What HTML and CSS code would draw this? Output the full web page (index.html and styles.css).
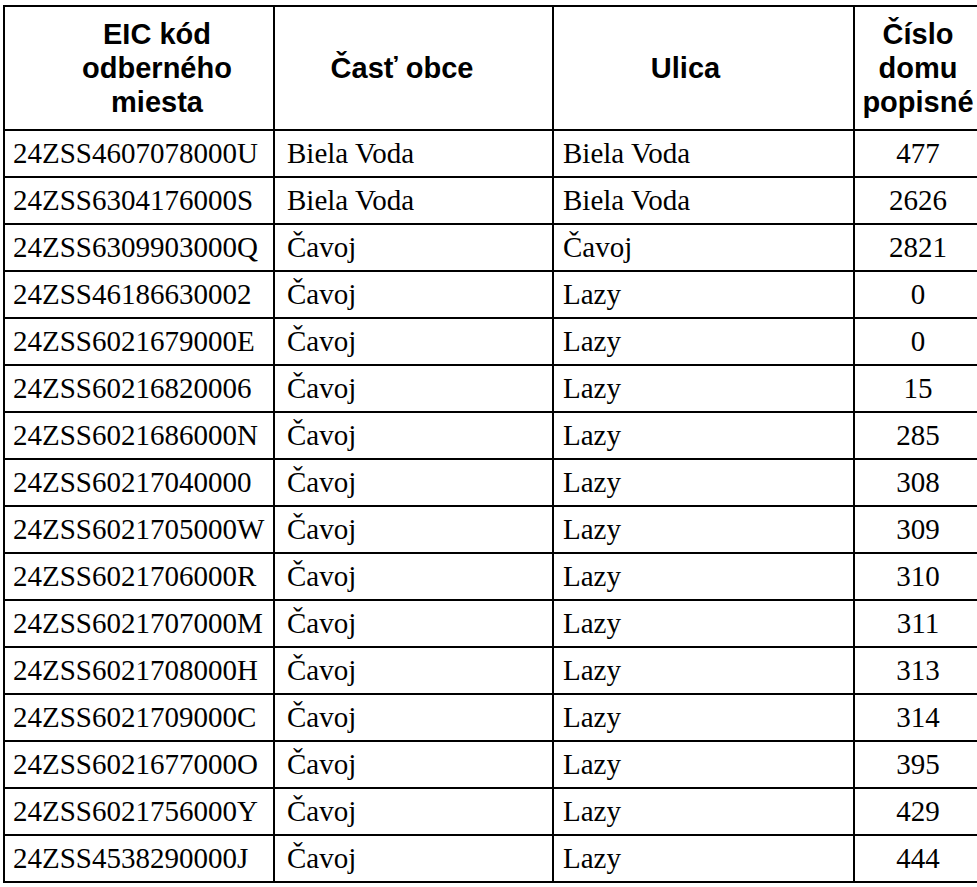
FILE: index.html
```html
<!DOCTYPE html>
<html lang="sk">
<head>
<meta charset="utf-8">
<title>Odberné miesta</title>
<link rel="stylesheet" href="styles.css">
</head>
<body>
<table class="grid">
  <colgroup>
    <col class="c-eic">
    <col class="c-cast">
    <col class="c-ulica">
    <col class="c-cislo">
  </colgroup>
  <thead>
    <tr class="head">
      <th class="h-eic">EIC kód<br>odberného<br>miesta</th>
      <th class="h-cast">Časť obce</th>
      <th class="h-ulica">Ulica</th>
      <th class="h-cislo">Číslo<br>domu<br>popisné</th>
    </tr>
  </thead>
  <tbody>
    <tr><td>24ZSS4607078000U</td><td class="pl">Biela Voda</td><td class="pl2">Biela Voda</td><td class="num">477</td></tr>
    <tr><td>24ZSS6304176000S</td><td class="pl">Biela Voda</td><td class="pl2">Biela Voda</td><td class="num">2626</td></tr>
    <tr><td>24ZSS6309903000Q</td><td class="pl">Čavoj</td><td class="pl2">Čavoj</td><td class="num">2821</td></tr>
    <tr><td>24ZSS46186630002</td><td class="pl">Čavoj</td><td class="pl2">Lazy</td><td class="num">0</td></tr>
    <tr><td>24ZSS6021679000E</td><td class="pl">Čavoj</td><td class="pl2">Lazy</td><td class="num">0</td></tr>
    <tr><td>24ZSS60216820006</td><td class="pl">Čavoj</td><td class="pl2">Lazy</td><td class="num">15</td></tr>
    <tr><td>24ZSS6021686000N</td><td class="pl">Čavoj</td><td class="pl2">Lazy</td><td class="num">285</td></tr>
    <tr><td>24ZSS60217040000</td><td class="pl">Čavoj</td><td class="pl2">Lazy</td><td class="num">308</td></tr>
    <tr><td>24ZSS6021705000W</td><td class="pl">Čavoj</td><td class="pl2">Lazy</td><td class="num">309</td></tr>
    <tr><td>24ZSS6021706000R</td><td class="pl">Čavoj</td><td class="pl2">Lazy</td><td class="num">310</td></tr>
    <tr><td>24ZSS6021707000M</td><td class="pl">Čavoj</td><td class="pl2">Lazy</td><td class="num">311</td></tr>
    <tr><td>24ZSS6021708000H</td><td class="pl">Čavoj</td><td class="pl2">Lazy</td><td class="num">313</td></tr>
    <tr><td>24ZSS6021709000C</td><td class="pl">Čavoj</td><td class="pl2">Lazy</td><td class="num">314</td></tr>
    <tr><td>24ZSS6021677000O</td><td class="pl">Čavoj</td><td class="pl2">Lazy</td><td class="num">395</td></tr>
    <tr><td>24ZSS6021756000Y</td><td class="pl">Čavoj</td><td class="pl2">Lazy</td><td class="num">429</td></tr>
    <tr><td>24ZSS4538290000J</td><td class="pl">Čavoj</td><td class="pl2">Lazy</td><td class="num">444</td></tr>
  </tbody>
</table>
</body>
</html>
```

FILE: styles.css
```css
html, body {
  margin: 0;
  padding: 0;
  background: #ffffff;
  overflow: hidden;
}

body {
  padding: 5px 0 0 3px;
  font-family: "Liberation Serif", "Times New Roman", serif;
  color: #000000;
}

.grid {
  border-collapse: collapse;
  table-layout: fixed;
  width: 980px;
}

.c-eic { width: 270px; }
.c-cast { width: 279px; }
.c-ulica { width: 301px; }
.c-cislo { width: 128px; }

.grid th,
.grid td {
  border: 2px solid #000000;
  padding: 0;
  vertical-align: middle;
  overflow: hidden;
  white-space: nowrap;
}

.grid .head th {
  height: 122px;
  font-family: "Liberation Sans", Arial, sans-serif;
  font-weight: bold;
  font-size: 29px;
  line-height: 34px;
  text-align: center;
}

.grid .head .h-eic { padding-left: 36px; }
.grid .head .h-cast { padding-right: 23px; }
.grid .head .h-ulica { padding-right: 36px; }
.grid .head .h-cislo { padding-left: 0; }

.grid td {
  height: 45px;
  font-size: 29px;
  line-height: 33px;
  padding-left: 8px;
}

.grid td.pl { padding-left: 12px; }
.grid td.pl2 { padding-left: 9px; }

.grid td.num {
  text-align: center;
  padding-left: 0;
}
```
